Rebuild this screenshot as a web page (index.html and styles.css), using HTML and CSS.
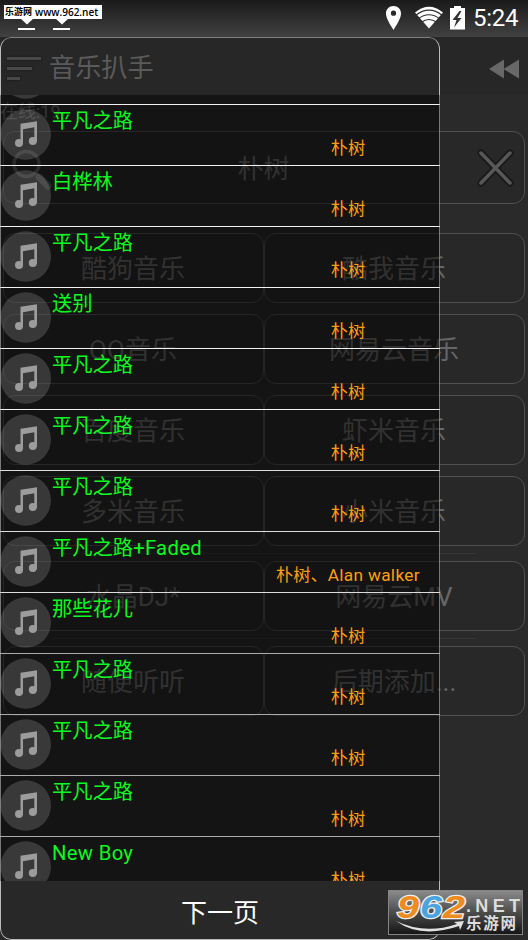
FILE: index.html
```html
<!DOCTYPE html>
<html lang="zh-CN">
<head>
<meta charset="utf-8">
<title>音乐扒手</title>
<link rel="stylesheet" href="styles.css">
</head>
<body>
<svg class="defs" width="0" height="0">
  <symbol id="note" viewBox="0 0 51 51">
    <circle class="disc" cx="25.700" cy="25.500" r="25.300"/>
    <path class="note" d="M20.500 14.800 37 12.200V33h-2.700V18.200L23 20.300V35H20.500Z"/>
    <circle class="note" cx="19" cy="34" r="4"/>
    <circle class="note" cx="32.800" cy="32" r="4"/>
  </symbol>
</svg>
<div class="screen">
  <header class="status">
    <svg class="downloads" width="90" height="37" viewBox="0 0 90 37">
      <path d="M20 18h14l-7 6.500zM55 18h14l-7 6.500zM18 28h17v2H18zM53 28h17v2H53z"/>
    </svg>
    <svg class="status-icons" width="82" height="37" viewBox="0 0 82 37">
      <path fill-rule="evenodd" d="M7.500 6C3 6 0 9.300 0 13.500 0 18.500 4.500 25 7.500 30c3-5 7.500-11.500 7.500-16.500C15 9.300 12 6 7.500 6Zm0 4.600a2.600 2.600 0 1 1 0 5.200 2.600 2.600 0 0 1 0-5.200Z"/>
      <path d="M29 12.500Q43 1 57 12.500L43 28.500Z"/>
      <path class="wave" d="M29.500 15.500Q43 4.800 56.500 15.500M32 19Q43 10.500 54 19M35 22.500Q43 16.500 51 22.500"/>
      <path d="M64 8h4V6h7v2h4v21.500H64Z"/>
      <path class="bolt" d="m73.500 11-7 9h4l-2.500 7.500 7.500-9.500h-4l4-7Z"/>
    </svg>
    <span class="clock">5:24</span>
  </header>
  <div class="toolbar">
    <svg width="40" height="30" viewBox="0 0 40 30"><path class="bars" d="M3 5.500h34M3 15.500h25M3 25.500h13"/></svg>
    <h1>音乐扒手</h1>
    <svg class="rewind" width="32" height="22" viewBox="0 0 32 22"><path d="M1 11 16 1.500v19ZM15.500 11 31 1.500v19Z"/></svg>
  </div>
  <main class="page">
    <p class="online">在线:19</p>
    <div class="search">
      <svg width="50" height="68" viewBox="0 0 50 68"><circle cx="22.500" cy="30" r="12.500"/><path class="handle" d="m35 43 9 9"/></svg>
      <span>朴树</span>
      <svg class="clear" width="40" height="40" viewBox="0 0 40 40"><path class="shade" d="m5 5 29 30M34 5 5 35"/><path d="m5 5 29 30M34 5 5 35"/></svg>
    </div>
    <div class="sources">
      <div class="source">酷狗音乐</div><div class="source">酷我音乐</div>
      <div class="source">QQ音乐</div><div class="source">网易云音乐</div>
      <div class="source">百度音乐</div><div class="source">虾米音乐</div>
      <div class="source">多米音乐</div><div class="source">小米音乐</div>
    </div>
    <hr>
    <div class="sources"><div class="source">水晶DJ*</div><div class="source">网易云MV</div></div>
    <hr>
    <div class="sources"><div class="source">随便听听</div><div class="source">后期添加...</div></div>
  </main>

  <aside class="drawer">
    <ul class="songs">
      <li class="song bright"><svg class="icon"><use href="#note"/></svg></li>
      <li class="song bright"><svg class="icon"><use href="#note"/></svg><div class="title">平凡之路</div><div class="artist">朴树</div></li>
      <li class="song bright"><svg class="icon"><use href="#note"/></svg><div class="title">白桦林</div><div class="artist">朴树</div></li>
      <li class="song bright"><svg class="icon"><use href="#note"/></svg><div class="title">平凡之路</div><div class="artist">朴树</div></li>
      <li class="song bright"><svg class="icon"><use href="#note"/></svg><div class="title">送别</div><div class="artist">朴树</div></li>
      <li class="song bright"><svg class="icon"><use href="#note"/></svg><div class="title">平凡之路</div><div class="artist">朴树</div></li>
      <li class="song"><svg class="icon"><use href="#note"/></svg><div class="title">平凡之路</div><div class="artist">朴树</div></li>
      <li class="song"><svg class="icon"><use href="#note"/></svg><div class="title">平凡之路</div><div class="artist">朴树</div></li>
      <li class="song"><svg class="icon"><use href="#note"/></svg><div class="title">平凡之路<span class="latin">+Faded</span></div><div class="artist">朴树、<span class="latin">Alan walker</span></div></li>
      <li class="song dim"><svg class="icon"><use href="#note"/></svg><div class="title">那些花儿</div><div class="artist">朴树</div></li>
      <li class="song dim"><svg class="icon"><use href="#note"/></svg><div class="title">平凡之路</div><div class="artist">朴树</div></li>
      <li class="song dim"><svg class="icon"><use href="#note"/></svg><div class="title">平凡之路</div><div class="artist">朴树</div></li>
      <li class="song dim"><svg class="icon"><use href="#note"/></svg><div class="title">平凡之路</div><div class="artist">朴树</div></li>
      <li class="song"><svg class="icon"><use href="#note"/></svg><div class="title"><span class="latin">New Boy</span></div><div class="artist">朴树</div></li>
    </ul>
    <div class="next">下一页</div>
  </aside>

  <div class="site-tag">乐游网 <span>www.962.net</span></div>
  <svg class="watermark" width="135" height="45" viewBox="0 0 135 45">
    <defs><linearGradient id="wm" x2="0" y2="1"><stop offset="0" stop-color="#8c8c8c"/><stop offset=".5" stop-color="#4b4b4b"/><stop offset="1" stop-color="#151515"/></linearGradient></defs>
    <rect x=".5" y=".5" width="134" height="44" fill="url(#wm)" stroke="#858585"/>
    <path class="swoosh" d="M8 31q29 14 61 3l-3-2 10-1-4 9-1-4Q33 49 8 31Z"/>
    <text class="digits orange" x="9" y="27.500" textLength="22" lengthAdjust="spacingAndGlyphs">9</text>
    <text class="digits blue" x="32" y="27.500" textLength="22" lengthAdjust="spacingAndGlyphs">6</text>
    <text class="digits orange" x="55" y="27.500" textLength="22" lengthAdjust="spacingAndGlyphs">2</text>
    <text class="net" x="78" y="22" textLength="54">.NET</text>
    <text class="site" x="78" y="39" textLength="50">乐游网</text>
  </svg>
</div>
</body>
</html>
```
FILE: styles.css
```css
* { box-sizing: border-box; }
body { margin: 0; background: #2a2a2a; font-family: Roboto, "Noto Sans CJK SC", sans-serif; }
.defs { position: absolute; }
svg { display: block; flex: none; }
h1, p, ul { margin: 0; padding: 0; font-weight: 400; }
.screen { position: relative; width: 528px; height: 940px; overflow: hidden; background: #2a2a2a; }

.status { display: flex; align-items: center; height: 37px; padding-right: 9px; background: linear-gradient(#1a1a1a, #414141); color: #fff; fill: #fff; }
.status-icons { margin-left: auto; margin-right: 5px; }
.wave { fill: none; stroke: #303030; stroke-width: 1.1; }
.bolt { fill: #303030; }
.clock { width: 46px; font-size: 24px; line-height: 39px; letter-spacing: -.3px; }

.toolbar { display: flex; align-items: center; height: 58px; padding: 0 7px 0 4px; background: #272727; color: #5a5a5a; }
.toolbar svg:first-child { margin-top: 4px; }
.bars { stroke: #484848; stroke-width: 3.2; filter: drop-shadow(0 0 1px #111); }
.toolbar h1 { margin-left: 5px; padding-top: 4px; font-size: 26.2px; line-height: 58px; }
.toolbar .rewind { margin-left: auto; margin-right: 1px; margin-top: 5px; fill: #686868; }

.page { color: #666; font-size: 26px; }
.online { padding-top: 6px; height: 36px; font-size: 18px; line-height: 22px; color: #6a6a6a; }
.search { display: flex; align-items: center; justify-content: space-between; height: 73px; margin: 0 3px 29px; padding-right: 8px; border: 1px solid #505050; border-radius: 12px; background: #282828; fill: none; stroke: #585858; stroke-width: 3.500; }
.search svg { stroke-linecap: round; }
.search .handle { stroke-width: 7; }
.search span { margin: -2px 0 0 -3px; }
.clear .shade { stroke: #191919; stroke-width: 7; }
.sources { display: grid; grid-template-columns: 1fr 1fr; row-gap: 11px; margin: 0 3px; }
.source { height: 70px; border: 1px solid #505050; border-radius: 12px; background: #282828; text-align: center; line-height: 71px; }
.source:nth-child(even) { padding-right: 1px; }
.source:nth-child(odd) { padding-right: 1px; }
hr { width: 424px; height: 1px; margin: 7px 0 7px 52px; border: 0; background: #363636; }

.drawer { position: absolute; left: 0; top: 37px; display: flex; flex-direction: column; width: 440px; height: 903px; padding-top: 58px; overflow: hidden; border-radius: 11px; }
.drawer::after { content: ""; position: absolute; inset: 0; border: 1px solid #bcbcbc; border-top-color: #808080; border-radius: 11px; mask-image: linear-gradient(#000 58px, rgba(0,0,0,.6) 58px 844px, #000 844px); }
.songs { height: 786px; overflow: hidden; list-style: none; background: rgba(0,0,0,.52); }
.song { display: grid; grid-template-columns: 52px 1fr; grid-template-rows: 30px 30px; height: 61px; border-bottom: 1px solid #ddd; }
.song:first-child { margin-top: -51px; }
.song.bright { border-color: #f2f2f2; }
.song.dim { border-color: #aaa; }
.icon { grid-row: 1 / 3; width: 51px; height: 51px; margin-top: 4px; }
.disc { fill: rgba(255,255,255,.16); }
.note { fill: #9c9c9c; }
.title { font-size: 20.3px; line-height: 32px; color: #0dfa20; }
.title .latin { letter-spacing: .3px; }
.artist { width: 176px; margin-left: 208px; font-size: 17.2px; line-height: 27px; text-align: center; color: #ff9d12; }
.artist .latin { letter-spacing: .35px; }
.next { height: 59px; background: #282828; color: #fff; font-size: 26px; line-height: 64px; text-align: center; }

.site-tag { position: absolute; left: 4px; top: 5px; display: flex; gap: 3px; width: 98px; height: 14px; padding-left: 1px; background: #fff; color: #000; font: bold 9px/14px "Noto Sans CJK SC", sans-serif; white-space: nowrap; }
.site-tag span { font: 600 10px/15px "Open Sans", sans-serif; }
.watermark { position: absolute; left: 388px; top: 890px; }
.digits { font: italic bold 32px "Liberation Sans", sans-serif; stroke: #eee; stroke-width: 2.500; paint-order: stroke; }
.orange { fill: #ed8b20; }
.blue { fill: #4ba5dc; }
.net { font: bold 18px "Liberation Sans", sans-serif; fill: #ddd; }
.site { font: bold 15.500px "Noto Sans CJK SC", sans-serif; fill: #ddd; }
.swoosh { fill: #e2e2e2; }
```
